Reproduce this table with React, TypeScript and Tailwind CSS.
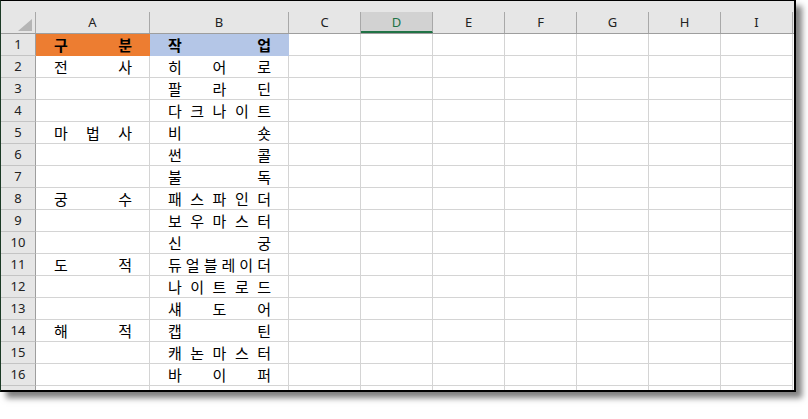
import React from "react";

const cols = ["C", "D", "E", "F", "G", "H", "I"];

const rows: [string[], string[]][] = [
  [["구", "분"], ["작", "업"]],
  [["전", "사"], ["히", "어", "로"]],
  [[], ["팔", "라", "딘"]],
  [[], ["다", "크", "나", "이", "트"]],
  [["마", "법", "사"], ["비", "숏"]],
  [[], ["썬", "콜"]],
  [[], ["불", "독"]],
  [["궁", "수"], ["패", "스", "파", "인", "더"]],
  [[], ["보", "우", "마", "스", "터"]],
  [[], ["신", "궁"]],
  [["도", "적"], ["듀", "얼", "블", "레", "이", "더"]],
  [[], ["나", "이", "트", "로", "드"]],
  [[], ["섀", "도", "어"]],
  [["해", "적"], ["캡", "틴"]],
  [[], ["캐", "논", "마", "스", "터"]],
  [[], ["바", "이", "퍼"]],
  [[], []],
];

const kr = { fontFamily: '"Noto Sans CJK KR", "Noto Sans", sans-serif' };
const ui = { fontFamily: '"Noto Sans", "Open Sans", sans-serif' };

function Dist({ chars, bold }: { chars: string[]; bold?: boolean }) {
  return (
    <div
      className={`flex h-full items-center justify-between pl-[18px] pr-[17px] pb-[1px] text-[15px] leading-none text-black ${bold ? "font-bold" : ""}`}
      style={kr}
    >
      {chars.map((c, i) => (
        <span key={i}>{c}</span>
      ))}
    </div>
  );
}

export default function App() {
  return (
    <div className="w-[808px] h-[419px] bg-white">
      <div className="w-[796px] h-[392px] border-t border-l border-r-2 border-b-2 border-t-black border-l-[#1c3a26] border-r-black border-b-black overflow-hidden shadow-[6px_6px_6px_rgba(0,0,0,0.5)] bg-white">
        {/* header */}
        <div className="flex h-[33px] bg-[#e6e6e6] border-b border-[#9e9e9e] pt-[11px]" style={ui}>
          <div className="w-[35px] shrink-0 h-full border-r border-[#a8a8a8] flex justify-end items-end pr-[3px] pb-[2px]">
            <svg width="14" height="12" viewBox="0 0 14 12">
              <polygon points="14,0 14,12 0,12" fill="#b5b5b5" />
            </svg>
          </div>
          <div className="w-[114px] shrink-0 h-full border-r border-[#a8a8a8] flex items-center justify-center text-[13px] text-[#222]">A</div>
          <div className="w-[139px] shrink-0 h-full border-r border-[#a8a8a8] flex items-center justify-center text-[13px] text-[#222]">B</div>
          {cols.map((c) =>
            c === "D" ? (
              <div key={c} className="w-[72px] shrink-0 h-full border-r border-[#a8a8a8] bg-[#d2d2d2] border-b-2 border-b-[#217346] flex items-center justify-center text-[13px] text-[#217346] pt-[2px]">
                {c}
              </div>
            ) : (
              <div key={c} className="w-[72px] shrink-0 h-full border-r border-[#a8a8a8] flex items-center justify-center text-[13px] text-[#222]">
                {c}
              </div>
            )
          )}
        </div>
        {/* rows */}
        {rows.map(([a, b], i) => {
          const first = i === 0;
          const last = i === rows.length - 1;
          return (
            <div key={i} className="flex h-[22px]">
              <div className="w-[35px] shrink-0 bg-[#e6e6e6] border-r border-b border-r-[#9e9e9e] border-b-[#c4c4c4] flex items-center justify-center text-[13px] text-[#222]" style={ui}>
                {last ? "" : i + 1}
              </div>
              <div className={`w-[114px] shrink-0 border-r border-b ${first ? "bg-[#ed7d31] border-[#ed7d31]" : "border-[#d4d4d4]"}`}>
                <Dist chars={a} bold={first} />
              </div>
              <div className={`w-[139px] shrink-0 border-r border-b ${first ? "bg-[#b4c6e7] border-[#b4c6e7]" : "border-[#d4d4d4]"}`}>
                <Dist chars={b} bold={first} />
              </div>
              {cols.map((c) => (
                <div key={c} className="w-[72px] shrink-0 border-r border-b border-[#d4d4d4]" />
              ))}
            </div>
          );
        })}
      </div>
    </div>
  );
}
